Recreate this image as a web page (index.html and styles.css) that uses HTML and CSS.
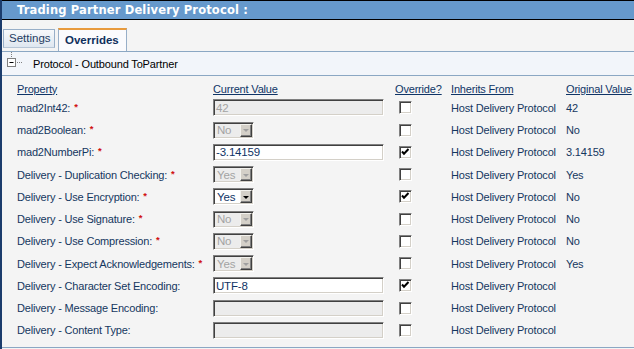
FILE: index.html
```html
<!DOCTYPE html>
<html>
<head>
<meta charset="utf-8">
<link rel="stylesheet" href="styles.css">
</head>
<body>
<div class="page">
  <div class="titlebar">Trading Partner Delivery Protocol :</div>
  <div class="tabs">
    <div class="tab">Settings</div>
    <div class="tab active">Overrides</div>
  </div>
  <div class="section">
    <svg class="tree" width="20" height="22" viewBox="0 0 20 22">
      <path d="M5.5 0v1M5.5 2v1M5.5 4v1" stroke="#808080" stroke-width="1"/>
      <rect x="1.5" y="6.5" width="8" height="8" fill="#fff" stroke="#808080"/>
      <path d="M3.5 10.5h4" stroke="#000"/>
      <path d="M11 10.5h1M13 10.5h1M15 10.5h1" stroke="#808080"/>
    </svg>
    <span class="sec-text">Protocol - Outbound ToPartner</span>
  </div>
  <div class="props">
    <div class="row head">
      <a class="lnk">Property</a><a class="lnk">Current Value</a><a class="lnk">Override?</a><a class="lnk">Inherits From</a><a class="lnk">Original Value</a>
    </div>

    <div class="row">
      <span class="lbl">mad2Int42: <span class="req">*</span></span>
      <span><span class="txt dis">42</span></span>
      <span><span class="cb"></span></span>
      <span class="val">Host Delivery Protocol</span>
      <span class="val">42</span>
    </div>

    <div class="row">
      <span class="lbl">mad2Boolean: <span class="req">*</span></span>
      <span><span class="sel dis"><span class="opt">No</span><span class="btn"><i class="arr"></i></span></span></span>
      <span><span class="cb"></span></span>
      <span class="val">Host Delivery Protocol</span>
      <span class="val">No</span>
    </div>

    <div class="row">
      <span class="lbl">mad2NumberPi: <span class="req">*</span></span>
      <span><span class="txt">-3.14159</span></span>
      <span><span class="cb on"><svg width="9" height="9" viewBox="0 0 9 9"><path d="M1 3.5l2 2.2 4.5-4.7" fill="none" stroke="#000" stroke-width="2"/></svg></span></span>
      <span class="val">Host Delivery Protocol</span>
      <span class="val">3.14159</span>
    </div>

    <div class="row">
      <span class="lbl">Delivery - Duplication Checking: <span class="req">*</span></span>
      <span><span class="sel dis"><span class="opt">Yes</span><span class="btn"><i class="arr"></i></span></span></span>
      <span><span class="cb"></span></span>
      <span class="val">Host Delivery Protocol</span>
      <span class="val">Yes</span>
    </div>

    <div class="row">
      <span class="lbl">Delivery - Use Encryption: <span class="req">*</span></span>
      <span><span class="sel"><span class="opt">Yes</span><span class="btn"><i class="arr"></i></span></span></span>
      <span><span class="cb on"><svg width="9" height="9" viewBox="0 0 9 9"><path d="M1 3.5l2 2.2 4.5-4.7" fill="none" stroke="#000" stroke-width="2"/></svg></span></span>
      <span class="val">Host Delivery Protocol</span>
      <span class="val">No</span>
    </div>

    <div class="row">
      <span class="lbl">Delivery - Use Signature: <span class="req">*</span></span>
      <span><span class="sel dis"><span class="opt">No</span><span class="btn"><i class="arr"></i></span></span></span>
      <span><span class="cb"></span></span>
      <span class="val">Host Delivery Protocol</span>
      <span class="val">No</span>
    </div>

    <div class="row">
      <span class="lbl">Delivery - Use Compression: <span class="req">*</span></span>
      <span><span class="sel dis"><span class="opt">No</span><span class="btn"><i class="arr"></i></span></span></span>
      <span><span class="cb"></span></span>
      <span class="val">Host Delivery Protocol</span>
      <span class="val">No</span>
    </div>

    <div class="row">
      <span class="lbl">Delivery - Expect Acknowledgements: <span class="req">*</span></span>
      <span><span class="sel dis"><span class="opt">Yes</span><span class="btn"><i class="arr"></i></span></span></span>
      <span><span class="cb"></span></span>
      <span class="val">Host Delivery Protocol</span>
      <span class="val">Yes</span>
    </div>

    <div class="row">
      <span class="lbl">Delivery - Character Set Encoding:</span>
      <span><span class="txt">UTF-8</span></span>
      <span><span class="cb on"><svg width="9" height="9" viewBox="0 0 9 9"><path d="M1 3.5l2 2.2 4.5-4.7" fill="none" stroke="#000" stroke-width="2"/></svg></span></span>
      <span class="val">Host Delivery Protocol</span>
      <span class="val"></span>
    </div>

    <div class="row">
      <span class="lbl">Delivery - Message Encoding:</span>
      <span><span class="txt dis"></span></span>
      <span><span class="cb"></span></span>
      <span class="val">Host Delivery Protocol</span>
      <span class="val"></span>
    </div>

    <div class="row">
      <span class="lbl">Delivery - Content Type:</span>
      <span><span class="txt dis"></span></span>
      <span><span class="cb"></span></span>
      <span class="val">Host Delivery Protocol</span>
      <span class="val"></span>
    </div>
  </div>
</div>
</body>
</html>
```

FILE: styles.css
```css
html, body {
  margin: 0;
  padding: 0;
  background: #f4f4f4;
}
body {
  font-family: "Liberation Sans", Arial, sans-serif;
  font-size: 11px;
  color: #14375f;
}
.page {
  width: 634px;
  height: 349px;
  box-sizing: border-box;
  border-left: 2px solid #1b3c6c;
  background: #f4f4f4;
  overflow: hidden;
}
.titlebar {
  height: 18px;
  border-top: 1px solid #000;
  border-bottom: 1px solid #000;
  background: #6699cc;
  color: #fff;
  font-family: "DejaVu Sans", Verdana, sans-serif;
  font-weight: bold;
  font-size: 11.5px;
  line-height: 18px;
  padding-left: 15px;
  letter-spacing: 0.15px;
}
.tabs {
  height: 31px;
  border-bottom: 1px solid #8ba7c3;
  display: flex;
  align-items: flex-end;
  padding-left: 1px;
  gap: 3px;
}
.tab {
  width: 52px;
  height: 19px;
  box-sizing: border-box;
  border: 1px solid #98afc8;
  border-bottom-color: #b7c6d6;
  background: linear-gradient(#f7f9fb, #dfe7f0);
  color: #1f3d63;
  line-height: 17px;
  padding-left: 5px;
  margin-bottom: 3px;
  font-size: 11.5px;
}
.tab.active {
  width: 69px;
  height: 23px;
  margin-bottom: 0;
  background: #fbfbfd;
  border-color: #98afc8;
  border-top: 2px solid #e89a3c;
  border-bottom: none;
  font-weight: bold;
  color: #0f2f5c;
  padding-left: 6px;
  line-height: 20px;
  font-size: 11.5px;
}
.section {
  height: 23px;
  border-bottom: 1px solid #8ba7c3;
  background: #f2f5fa;
  display: flex;
  align-items: center;
}
.tree {
  display: block;
  margin-left: 4px;
  margin-top: -2px;
}
.sec-text {
  margin-left: 7px;
  color: #000;
  letter-spacing: -0.15px;
}
.props {
  height: 272px;
  box-sizing: border-box;
  border-bottom: 1px solid #8ba7c3;
  padding-left: 15px;
}
.row {
  display: grid;
  grid-template-columns: 196px 182px 56px 115px 1fr;
  height: 22.25px;
  align-items: center;
  letter-spacing: -0.18px;
  white-space: nowrap;
}
.row.head {
  height: 20.7px;
  align-items: end;
}
.lnk {
  color: #0f3466;
  text-decoration: underline;
  line-height: 13px;
  margin-bottom: 1px;
}
.req {
  color: #d01010;
  font-size: 9.5px;
  font-weight: bold;
  position: relative;
  top: -2px;
  margin-left: 1px;
}
.txt {
  display: flex;
  align-items: center;
  width: 171px;
  height: 17px;
  box-sizing: border-box;
  border: 1px solid;
  border-color: #808080 #ffffff #ffffff #808080;
  box-shadow: inset 1px 1px 0 #404040, inset -1px -1px 0 #d4d0c8;
  background: #fff;
  padding-left: 2px;
  color: #0f3466;
  font-size: 11.5px;
}
.txt.dis {
  background: #ececec;
  color: #a3a3a3;
}
.sel {
  display: flex;
  align-items: center;
  justify-content: space-between;
  width: 41px;
  height: 17px;
  box-sizing: border-box;
  border: 1px solid;
  border-color: #808080 #ffffff #ffffff #808080;
  box-shadow: inset 1px 1px 0 #404040, inset -1px -1px 0 #d4d0c8;
  background: #fff;
  padding: 1px 1px 1px 3px;
  color: #0f3466;
  font-size: 11.5px;
}
.sel.dis {
  background: #ececec;
  color: #a3a3a3;
}
.btn {
  width: 12px;
  height: 13px;
  box-sizing: border-box;
  border: 1px solid;
  border-color: #f4f3ee #404040 #404040 #f4f3ee;
  box-shadow: inset -1px -1px 0 #808080;
  background: #d4d0c8;
  display: flex;
  align-items: center;
  justify-content: center;
}
.arr {
  display: block;
  width: 0;
  height: 0;
  border-left: 3px solid transparent;
  border-right: 3px solid transparent;
  border-top: 3px solid #000;
  margin-top: 1px;
  margin-right: 1px;
}
.sel.dis .arr {
  border-top-color: #a0a0a0;
}
.cb {
  display: flex;
  align-items: center;
  justify-content: center;
  width: 13px;
  height: 13px;
  box-sizing: border-box;
  margin-left: 4px;
  border: 1px solid;
  border-color: #808080 #ffffff #ffffff #808080;
  box-shadow: inset 1px 1px 0 #404040, inset -1px -1px 0 #d4d0c8;
  background: #fff;
}
.cb svg {
  display: block;
}
.val {
  color: #14375f;
}
```
